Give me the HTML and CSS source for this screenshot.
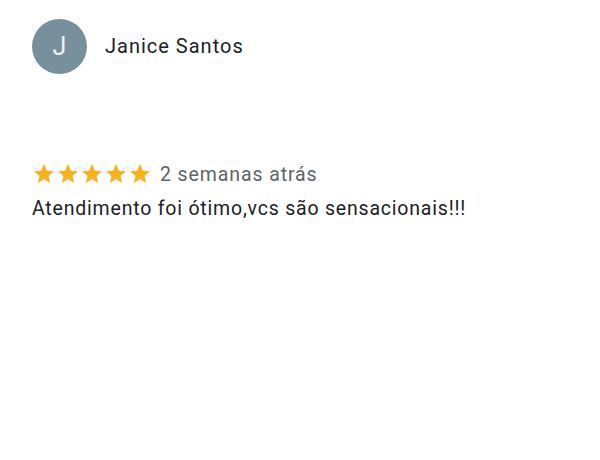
FILE: index.html
```html
<!DOCTYPE html>
<html lang="pt">
<head>
<meta charset="utf-8">
<link rel="stylesheet" href="styles.css">
</head>
<body>
<div class="review">
  <div class="author">
    <div class="avatar">J</div>
    <div class="name">Janice Santos</div>
  </div>
  <div class="meta">
    <div class="stars">
      <svg class="star" viewBox="0 0 24 24"><path d="M12 17.27L18.18 21l-1.64-7.03L22 9.24l-7.19-.61L12 2 9.19 8.63 2 9.24l5.46 4.730L5.82 21z"/></svg>
      <svg class="star" viewBox="0 0 24 24"><path d="M12 17.27L18.18 21l-1.64-7.03L22 9.24l-7.19-.61L12 2 9.19 8.63 2 9.24l5.46 4.73L5.82 21z"/></svg>
      <svg class="star" viewBox="0 0 24 24"><path d="M12 17.27L18.18 21l-1.64-7.03L22 9.24l-7.19-.61L12 2 9.19 8.63 2 9.24l5.46 4.73L5.82 21z"/></svg>
      <svg class="star" viewBox="0 0 24 24"><path d="M12 17.27L18.18 21l-1.64-7.03L22 9.24l-7.19-.61L12 2 9.19 8.63 2 9.24l5.46 4.73L5.82 21z"/></svg>
      <svg class="star" viewBox="0 0 24 24"><path d="M12 17.27L18.18 21l-1.64-7.03L22 9.24l-7.19-.61L12 2 9.19 8.63 2 9.24l5.46 4.73L5.82 21z"/></svg>
    </div>
    <span class="date">2 semanas atrás</span>
  </div>
  <p class="text">Atendimento foi ótimo,vcs são sensacionais!!!</p>
</div>
</body>
</html>
```

FILE: styles.css
```css
html, body {
  margin: 0;
  padding: 0;
  background: #ffffff;
}
body {
  font-family: Roboto, "Noto Sans", Arial, sans-serif;
  color: #202124;
}
.review {
  padding: 19px 32px 0 32px;
}
.author {
  display: flex;
  align-items: center;
  gap: 18px;
}
.avatar {
  width: 55px;
  height: 55px;
  border-radius: 50%;
  background: #78909c;
  color: #eef2f4;
  font-size: 25px;
  display: flex;
  align-items: center;
  justify-content: center;
}
.name {
  font-size: 20px;
  letter-spacing: 1px;
  color: #202124;
  margin-top: -2px;
}
.meta {
  display: flex;
  align-items: center;
  gap: 8px;
  margin-top: 88px;
}
.stars {
  display: flex;
}
.star {
  width: 24px;
  height: 24px;
  fill: #f9b21d;
}
.date {
  font-size: 19.5px;
  letter-spacing: 0.9px;
  color: #5f6368;
}
.text {
  margin: 11px 0 0 0;
  font-size: 19.5px;
  letter-spacing: 0.8px;
  color: #202124;
}
```
